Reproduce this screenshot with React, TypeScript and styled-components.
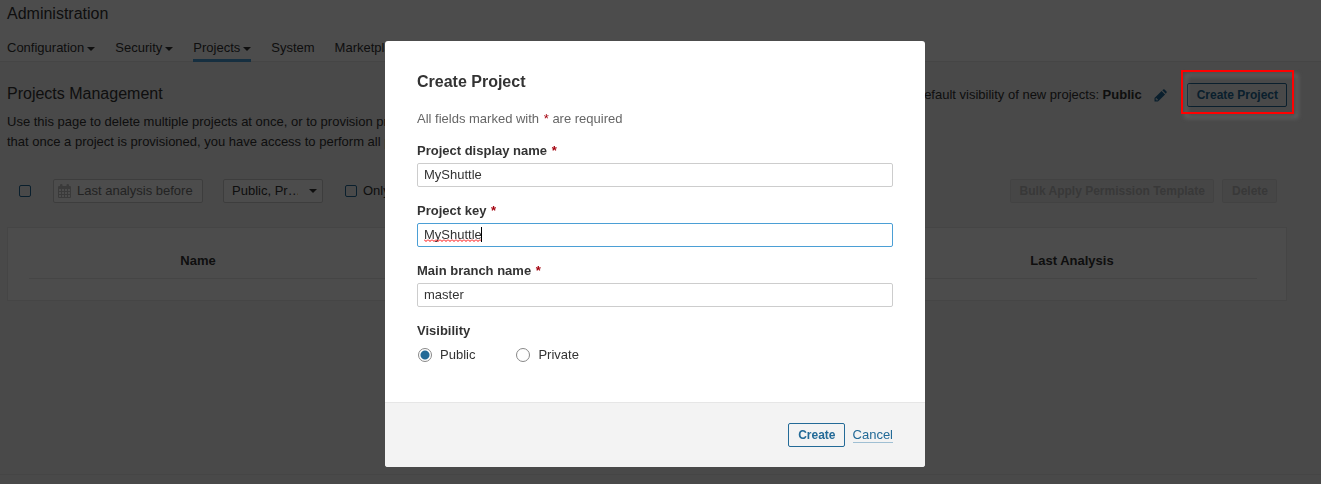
import React, { useState } from "react";
import styled, { createGlobalStyle, css } from "styled-components";

const GlobalStyle = createGlobalStyle`
  *, *::before, *::after { box-sizing: border-box; }
  body {
    margin: 0;
    background: #f3f3f3;
    color: #333;
    font: 13px/20px "Liberation Sans", Arial, sans-serif;
  }
  h1, h2, p { margin: 0; }
  button, input, select { font: inherit; color: inherit; }
`;

const Page = styled.div`
  display: flex;
  flex-direction: column;
  min-height: 100vh;
`;

const Header = styled.header`
  padding: 4px 34px 0 7px;
  background: #fff;
  border-bottom: 1px solid #e6e6e6;
`;

const Title = styled.h1`
  font-size: 16px;
  font-weight: 400;
  line-height: 20px;
`;

const Nav = styled.nav`
  display: flex;
  gap: 20px;
  margin: 14px 0 -1px;
`;

const NavLink = styled.a<{ $active?: boolean }>`
  display: flex;
  align-items: center;
  gap: 3px;
  padding-bottom: 1px;
  color: #333;
  text-decoration: none;
  border-bottom: 3px solid ${(p) => (p.$active ? "#4b9fd5" : "transparent")};
`;

const Caret = styled.svg`
  width: 8px;
  height: 4px;
  fill: #333;
  margin-top: 2px;
`;

const Main = styled.main`
  flex: 1;
  padding: 21px 34px 0 7px;
`;

const PageHead = styled.div`
  display: flex;
  justify-content: space-between;
  align-items: flex-start;
`;

const PageTitle = styled.h2`
  font-size: 16px;
  font-weight: 400;
  line-height: 22px;
`;

const PageActions = styled.div`
  display: flex;
  align-items: center;
`;

const EditButton = styled.button`
  display: flex;
  margin: 0 20px 0 12px;
  padding: 0;
  border: 0;
  background: none;
`;

const Button = styled.button`
  height: 24px;
  padding: 0 8px 0 9px;
  border: 1px solid #236a97;
  border-radius: 2px;
  background: transparent;
  color: #236a97;
  font-size: 12px;
  font-weight: 700;
  line-height: 22px;

  &:disabled {
    border-color: #ddd;
    background: #ebebeb;
    color: #bbb;
  }
`;

const Highlighted = styled.div`
  position: relative;
  display: flex;
`;

const HighlightFrame = styled.span`
  position: absolute;
  z-index: 20;
  inset: -13px -7px -7px -6px;
  border: 2px solid #f00;
  filter: drop-shadow(4px 4px 2px rgba(130, 130, 130, 0.6));
  pointer-events: none;
`;

const Description = styled.p`
  margin-top: 5px;
`;

const Toolbar = styled.div`
  display: flex;
  align-items: center;
  margin: 27px 10px 24px 12px;
`;

const Checkbox = styled.input`
  appearance: none;
  flex: none;
  width: 12px;
  height: 12px;
  margin: 0;
  border: 1px solid #236a97;
  border-radius: 2px;
`;

const DateField = styled.label`
  display: flex;
  align-items: center;
  gap: 6px;
  width: 150px;
  height: 24px;
  margin: 0 20px 0 22px;
  padding: 0 4px;
  border: 1px solid #cdcdcd;
  border-radius: 2px;
  background: #fff;
`;

const DateInput = styled.input`
  flex: 1;
  min-width: 0;
  padding: 0;
  border: 0;
  background: none;
  outline: 0;

  &::placeholder {
    color: #757575;
  }
`;

const SelectBox = styled.div`
  position: relative;
  display: flex;
  width: 100px;
  margin-right: 22px;

  ${Caret} {
    position: absolute;
    right: 6px;
    top: 8px;
  }
`;

const Select = styled.select`
  appearance: none;
  width: 100%;
  height: 24px;
  padding: 0 24px 0 8px;
  border: 1px solid #cdcdcd;
  border-radius: 2px;
  background: #fff;
`;

const CheckLabel = styled.label`
  display: flex;
  align-items: center;
  gap: 6px;
`;

const BulkActions = styled.div`
  display: flex;
  gap: 8px;
  margin-left: auto;
`;

const Panel = styled.section`
  padding: 21px 29px 21px 21px;
  border: 1px solid #e6e6e6;
  background: #fff;
`;

const Table = styled.table`
  width: 100%;
  border-collapse: collapse;
  table-layout: fixed;
`;

const HeadCell = styled.th<{ $width?: string }>`
  width: ${(p) => p.$width ?? "auto"};
  height: 29px;
  padding: 0 0 5px;
  border-bottom: 1px solid #e6e6e6;
  text-align: center;
`;

const PageFooter = styled.footer`
  height: 10px;
  border-top: 1px solid #e6e6e6;
`;

const Backdrop = styled.div`
  position: fixed;
  z-index: 10;
  inset: 0;
  display: flex;
  justify-content: center;
  align-items: flex-start;
  padding: 41px 11px 0 0;
  background: rgba(0, 0, 0, 0.7);
`;

const Dialog = styled.form`
  width: 540px;
  border-radius: 3px;
  overflow: hidden;
  background: #fff;
`;

const DialogBody = styled.div`
  padding: 31px 32px 37px;
`;

const DialogTitle = styled.h2`
  font-size: 16px;
  font-weight: 700;
  line-height: 20px;
`;

const Note = styled.p`
  margin: 17px 0 12px;
  color: #666;
`;

const Required = styled.em`
  margin-left: 1px;
  color: #a4030f;
  font-style: normal;
`;

const Field = styled.div`
  margin-bottom: 14px;
`;

const fieldHeading = css`
  display: block;
  padding: 0;
  font-weight: 700;
`;

const Label = styled.label`
  ${fieldHeading}
  margin-bottom: 2px;
`;

const InputWrap = styled.div`
  position: relative;
`;

const TextInput = styled.input<{ $focused?: boolean }>`
  display: block;
  width: 100%;
  height: 24px;
  padding: 0 6px 2px;
  border: 1px solid ${(p) => (p.$focused ? "#4b9fd5" : "#cdcdcd")};
  border-radius: 2px;
  outline: 0;
`;

const TextCursor = styled.span`
  position: absolute;
  left: 64px;
  top: 4px;
  width: 1px;
  height: 15px;
  background: #000;
`;

const SpellingMark = styled.svg`
  position: absolute;
  left: 7px;
  top: 16px;
  width: 57px;
  height: 3px;
  pointer-events: none;
`;

const Fieldset = styled.fieldset`
  margin: 0;
  padding: 0;
  border: 0;
`;

const Legend = styled.legend`
  ${fieldHeading}
  margin-bottom: 4px;
`;

const Options = styled.div`
  display: flex;
  gap: 40px;
`;

const Option = styled.label`
  display: flex;
  align-items: center;
  gap: 8px;
  padding-left: 1px;
`;

const Radio = styled.input`
  appearance: none;
  width: 14px;
  height: 14px;
  margin: 0;
  border: 1px solid #888;
  border-radius: 50%;
  background: #fff;

  &:checked {
    background: radial-gradient(circle, #236a97 4px, #fff 5px);
  }
`;

const DialogFooter = styled.footer`
  display: flex;
  justify-content: flex-end;
  align-items: center;
  gap: 8px;
  padding: 20px 32px;
  border-top: 1px solid #e6e6e6;
  background: #f3f3f3;
`;

const CancelLink = styled.a`
  border-bottom: 1px solid #9fbfd3;
  color: #236a97;
  line-height: 15px;
  text-decoration: none;
`;

const CaretIcon = () => (
  <Caret viewBox="0 0 8 4" aria-hidden="true">
    <path d="M0 0h8L4 4z" />
  </Caret>
);

const PencilIcon = () => (
  <svg width="13" height="13" viewBox="0 0 13 13" fill="#236a97" aria-hidden="true">
    <path
      fillRule="evenodd"
      d="M.5 9 7.600 1.900 11.100 5.400 4 12.500H.5zM1.500 9.700V10.500H2.500V11.500H3.300L4 10.800 2.200 9z"
    />
    <path d="M8.300 1.200 9.200.4Q9.900-.1 10.600.5L12.500 2.400Q13.100 3.100 12.500 3.800L11.800 4.700z" />
  </svg>
);

const CalendarIcon = () => (
  <svg width="13" height="14" viewBox="0 0 13 14" aria-hidden="true">
    <path
      fill="#c4c4c4"
      fillRule="evenodd"
      d="M1 2h1V.8Q2 0 3.300 0T4.500.8V2h4V.8Q8.500 0 9.700 0T11 .8V2h1q1 0 1 1v10q0 1-1 1H1q-1 0-1-1V3q0-1 1-1zM1 5v2h2V5zM4 5v2h2V5zM7 5v2h2V5zM10 5v2h2V5zM1 8v2h2V8zM4 8v2h2V8zM7 8v2h2V8zM10 8v2h2V8zM1 11v2h2v-2zM4 11v2h2v-2zM7 11v2h2v-2zM10 11v2h2v-2z"
    />
  </svg>
);

const SpellingWave = () => (
  <SpellingMark aria-hidden="true">
    <defs>
      <pattern id="wave" width="4" height="3" patternUnits="userSpaceOnUse">
        <path d="M-1 .5 0 .5 2 2.500 4 .5 5 .5" fill="none" stroke="#f00" />
      </pattern>
    </defs>
    <rect width="100%" height="3" fill="url(#wave)" />
  </SpellingMark>
);

const navItems = [
  { name: "Configuration", menu: true },
  { name: "Security", menu: true },
  { name: "Projects", menu: true, active: true },
  { name: "System" },
  { name: "Marketplace" },
];

function CreateProjectDialog() {
  const [name, setName] = useState("MyShuttle");
  const [key, setKey] = useState("MyShuttle");
  const [branch, setBranch] = useState("master");
  const fields = [
    { id: "name", label: "Project display name", value: name, set: setName },
    { id: "key", label: "Project key", value: key, set: setKey, focused: true },
    { id: "branch", label: "Main branch name", value: branch, set: setBranch },
  ];

  return (
    <Backdrop>
      <Dialog role="dialog" aria-labelledby="dialog-title" onSubmit={(e) => e.preventDefault()}>
        <DialogBody>
          <DialogTitle id="dialog-title">Create Project</DialogTitle>
          <Note>
            All fields marked with <Required>*</Required> are required
          </Note>
          {fields.map((f) => (
            <Field key={f.id}>
              <Label htmlFor={f.id}>
                {f.label} <Required>*</Required>
              </Label>
              <InputWrap>
                <TextInput
                  id={f.id}
                  type="text"
                  value={f.value}
                  $focused={f.focused}
                  onChange={(e) => f.set(e.target.value)}
                />
                {f.focused && (
                  <>
                    <SpellingWave />
                    <TextCursor />
                  </>
                )}
              </InputWrap>
            </Field>
          ))}
          <Fieldset>
            <Legend>Visibility</Legend>
            <Options>
              <Option>
                <Radio type="radio" name="visibility" value="public" defaultChecked />
                Public
              </Option>
              <Option>
                <Radio type="radio" name="visibility" value="private" />
                Private
              </Option>
            </Options>
          </Fieldset>
        </DialogBody>
        <DialogFooter>
          <Button type="submit">Create</Button>
          <CancelLink href="#">Cancel</CancelLink>
        </DialogFooter>
      </Dialog>
    </Backdrop>
  );
}

export default function App() {
  return (
    <Page>
      <GlobalStyle />
      <Header>
        <Title>Administration</Title>
        <Nav>
          {navItems.map((item) => (
            <NavLink key={item.name} href="#" $active={item.active}>
              {item.name}
              {item.menu && <CaretIcon />}
            </NavLink>
          ))}
        </Nav>
      </Header>
      <Main>
        <PageHead>
          <PageTitle>Projects Management</PageTitle>
          <PageActions>
            <span>
              Default visibility of new projects: <strong>Public</strong>
            </span>
            <EditButton type="button" aria-label="Change default visibility">
              <PencilIcon />
            </EditButton>
            <Highlighted>
              <Button type="button">Create Project</Button>
              <HighlightFrame />
            </Highlighted>
          </PageActions>
        </PageHead>
        <Description>
          Use this page to delete multiple projects at once, or to provision projects if you would
          like to configure them before the first analysis. Note
          <br />
          that once a project is provisioned, you have access to perform all project configurations
          on it.
        </Description>
        <Toolbar>
          <Checkbox type="checkbox" aria-label="Select all projects" />
          <DateField>
            <CalendarIcon />
            <DateInput type="text" placeholder="Last analysis before" aria-label="Last analysis before" />
          </DateField>
          <SelectBox>
            <Select aria-label="Visibility">
              <option>Public, Pr…</option>
            </Select>
            <CaretIcon />
          </SelectBox>
          <CheckLabel>
            <Checkbox type="checkbox" />
            Only Provisioned
          </CheckLabel>
          <BulkActions>
            <Button type="button" disabled>
              Bulk Apply Permission Template
            </Button>
            <Button type="button" disabled>
              Delete
            </Button>
          </BulkActions>
        </Toolbar>
        <Panel>
          <Table>
            <thead>
              <tr>
                <HeadCell $width="338px">Name</HeadCell>
                <HeadCell as="td" />
                <HeadCell $width="370px">Last Analysis</HeadCell>
              </tr>
            </thead>
          </Table>
        </Panel>
      </Main>
      <PageFooter />
      <CreateProjectDialog />
    </Page>
  );
}
